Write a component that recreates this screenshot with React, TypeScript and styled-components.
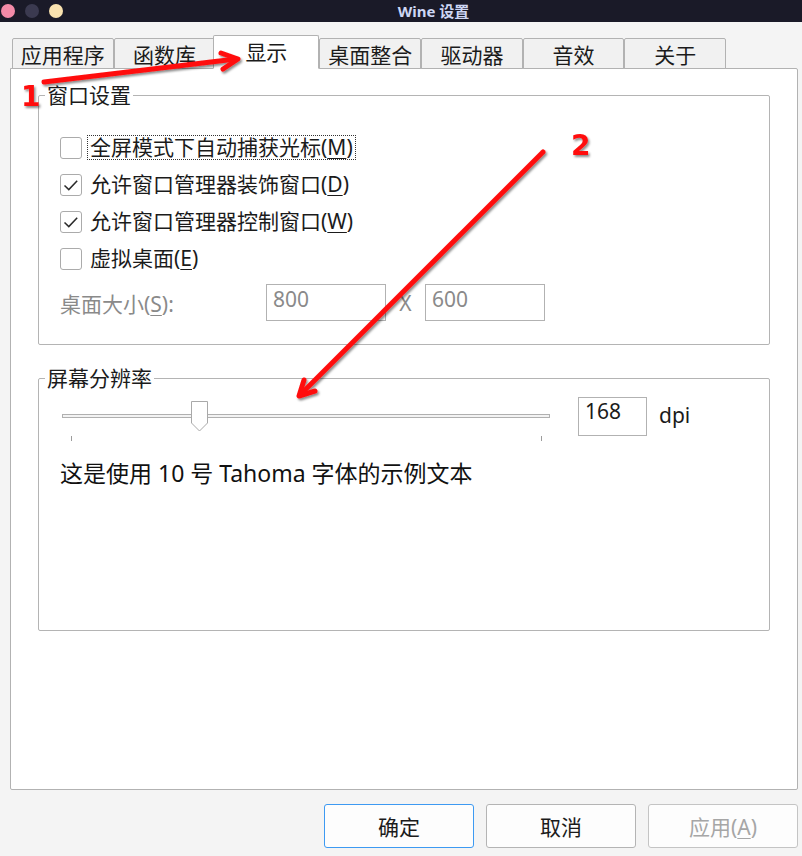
import { createGlobalStyle, styled } from "styled-components";

const GlobalStyle = createGlobalStyle`
  html, body {
    margin: 0;
    padding: 0;
    background: #f4f4f4;
  }

  body {
    font-family: "Noto Sans", "Noto Sans CJK SC", sans-serif;
    color: #1b1b1b;
  }

  * {
    box-sizing: border-box;
  }
`;

const tabs = ["应用程序", "函数库", "显示", "桌面整合", "驱动器", "音效", "关于"];
const activeTab = 2;

// slider geometry, taken from the dialog at 168 dpi
const trackWidth = 488;
const thumbWidth = 18;
const thumbLeft = 129;

const Checkmark = () => (
  <svg width="22" height="22" viewBox="0 0 22 22">
    <path
      d="M4.5 11.5 L8.8 15.6 L17.2 6.8"
      fill="none"
      stroke="#2a2a2a"
      strokeWidth="1.5"
    />
  </svg>
);

const Thumb = () => (
  <svg width="18" height="31" viewBox="0 0 18 31">
    <path
      d="M0.5 0.5 H16.5 V22 L8.5 30 L0.5 22 Z"
      fill="#ffffff"
      stroke="#a9a9a9"
    />
  </svg>
);

interface CheckProps {
  checked?: boolean;
  focused?: boolean;
  children: React.ReactNode;
}

const Check = ({ checked, focused, children }: CheckProps) => (
  <CheckRow>
    <CheckBox>{checked && <Checkmark />}</CheckBox>
    <CheckLabel $focused={focused}>{children}</CheckLabel>
  </CheckRow>
);

const Annotations = () => (
  <Overlay width="802" height="856" viewBox="0 0 802 856">
    <defs>
      <filter id="shade" x="-20%" y="-20%" width="140%" height="140%">
        <feDropShadow dx="1.5" dy="2" stdDeviation="1.2" floodColor="#000" floodOpacity="0.45" />
      </filter>
    </defs>
    <g
      filter="url(#shade)"
      fill="none"
      stroke="#ff1010"
      strokeWidth="5"
      strokeLinecap="round"
      strokeLinejoin="round"
    >
      <path d="M44 82 L236 59" />
      <path d="M221 53 L238 59 L223 69" />
      <path d="M543 152 L300 395" />
      <path d="M315 391 L299 396 L304 380" />
    </g>
    <g filter="url(#shade)" fill="#ff1010" fontFamily="DejaVu Sans, sans-serif" fontWeight="bold" fontSize="28">
      <text x="21" y="106">1</text>
      <text x="571" y="155">2</text>
    </g>
  </Overlay>
);

const App = () => {
  return (
    <Window>
      <GlobalStyle />
      <TitleBar>
        <Lights>
          <Light $color="#f38ba8" />
          <Light $color="#3b3a50" />
          <Light $color="#f9e2af" />
        </Lights>
        <Title>Wine 设置</Title>
      </TitleBar>

      <Body>
        <TabRow>
          {tabs.map((tab, i) => (
            <Tab key={tab} $active={i === activeTab}>
              {tab}
            </Tab>
          ))}
        </TabRow>

        <Pane>
          <GroupBox $padTop={22} $padBottom={23}>
            <Legend>窗口设置</Legend>
            <Check focused>
              全屏模式下自动捕获光标(<Key>M</Key>)
            </Check>
            <Check checked>
              允许窗口管理器装饰窗口(<Key>D</Key>)
            </Check>
            <Check checked>
              允许窗口管理器控制窗口(<Key>W</Key>)
            </Check>
            <Check>
              虚拟桌面(<Key>E</Key>)
            </Check>
            <SizeRow>
              <SizeLabel>
                桌面大小(<Key>S</Key>):
              </SizeLabel>
              <NumberBox>800</NumberBox>
              <Times>X</Times>
              <NumberBox>600</NumberBox>
            </SizeRow>
          </GroupBox>

          <GroupBox $padTop={7} $padBottom={142} $gap={21}>
            <Legend>屏幕分辨率</Legend>
            <SliderRow>
              <Slider>
                <Track />
                <ThumbHolder style={{ left: thumbLeft }}>
                  <Thumb />
                </ThumbHolder>
                <Tick $at={thumbWidth / 2} />
                <Tick $at={trackWidth - thumbWidth / 2} />
              </Slider>
              <DpiBox>168</DpiBox>
              <Unit>dpi</Unit>
            </SliderRow>
            <Sample>这是使用 10 号 Tahoma 字体的示例文本</Sample>
          </GroupBox>
        </Pane>

        <ButtonRow>
          <DialogButton $primary>确定</DialogButton>
          <DialogButton>取消</DialogButton>
          <DialogButton disabled>
            应用(<Key>A</Key>)
          </DialogButton>
        </ButtonRow>
      </Body>

      <Annotations />
    </Window>
  );
};

const Window = styled.div`
  position: relative;
  display: flex;
  flex-direction: column;

  width: 802px;
  height: 856px;

  background-color: #f4f4f4;
  overflow: hidden;
`;

const TitleBar = styled.div`
  display: flex;
  align-items: center;

  height: 22px;
  padding-left: 1px;

  background-color: #1a1a28;
`;

const Lights = styled.div`
  display: flex;
  gap: 10px;
`;

const Light = styled.span<{ $color: string }>`
  width: 14px;
  height: 14px;

  border-radius: 50%;
  background-color: ${({ $color }) => $color};
`;

const Title = styled.div`
  flex: 1;

  padding-left: 2px;

  text-align: center;
  font-size: 15px;
  font-weight: 700;
  line-height: 22px;
  color: #cdd6f4;
`;

const Body = styled.div`
  flex: 1;
  display: flex;
  flex-direction: column;

  padding: 13px 4px 8px 10px;
`;

const TabRow = styled.div`
  position: relative;
  z-index: 1;

  display: flex;
  align-items: flex-end;

  padding-left: 2px;
  margin-bottom: -1px;
`;

const Tab = styled.div<{ $active?: boolean }>`
  display: flex;
  flex-shrink: 0;
  align-items: center;
  justify-content: center;

  width: ${({ $active }) => ($active ? "106px" : "101.7px")};
  height: ${({ $active }) => ($active ? "34px" : "31px")};
  margin-left: ${({ $active }) => ($active ? "-2px" : "0")};
  padding-bottom: ${({ $active }) => ($active ? "3px" : "0")};

  border: 1px solid #b2b2b2;
  border-bottom-color: ${({ $active }) => ($active ? "#ffffff" : "#b2b2b2")};
  border-radius: 2px 2px 0 0;

  background-color: ${({ $active }) => ($active ? "#ffffff" : "#f1f1f1")};

  font-size: 21px;
  color: #1b1b1b;
`;

const Pane = styled.div`
  flex: 1;

  padding: 14px 27px;

  border: 1px solid #b2b2b2;
  border-radius: 0 2px 2px 2px;

  background-color: #ffffff;
`;

const GroupBox = styled.fieldset<{ $padTop: number; $padBottom: number; $gap?: number }>`
  display: flex;
  flex-direction: column;

  min-width: 0;
  margin: ${({ $gap }) => $gap ?? 0}px 0 0;
  padding: ${({ $padTop }) => $padTop}px 20px ${({ $padBottom }) => $padBottom}px 21px;

  border: 1px solid #b4b4b4;
  border-radius: 2px;
`;

const Legend = styled.legend`
  margin-left: -15px;
  padding: 0 2px;

  font-size: 21px;
  line-height: 24px;
  color: #1b1b1b;
`;

const CheckRow = styled.div`
  display: flex;
  align-items: center;

  height: 37px;
`;

const CheckBox = styled.span`
  display: flex;

  width: 22px;
  height: 22px;

  border: 1px solid #ababab;
  border-radius: 3px;

  background-color: #ffffff;

  svg {
    margin: -1px;
  }
`;

const CheckLabel = styled.span<{ $focused?: boolean }>`
  margin-left: 6px;
  padding: 0 2px;

  font-size: 21px;
  line-height: 23px;

  outline: ${({ $focused }) => ($focused ? "1px dotted #333" : "none")};
`;

const Key = styled.span`
  text-decoration: underline;
  text-underline-offset: 3px;
  text-decoration-thickness: 1px;
`;

const SizeRow = styled.div`
  display: flex;
  align-items: center;

  margin-top: 7px;
`;

const SizeLabel = styled.span`
  width: 206px;

  font-size: 21px;
  color: #8a8a8a;
`;

const NumberBox = styled.div`
  width: 120px;
  height: 37px;
  padding-left: 6px;

  border: 1px solid #b2b2b2;
  background-color: #ffffff;

  font-size: 21px;
  line-height: 28px;
  color: #8a8a8a;
`;

const Times = styled.span`
  width: 39px;

  text-align: center;
  font-size: 21px;
  color: #8a8a8a;
`;

const SliderRow = styled.div`
  display: flex;
  align-items: flex-start;
`;

const Slider = styled.div`
  position: relative;

  width: ${trackWidth}px;
  height: 39px;
  margin-left: 2px;
`;

const Track = styled.div`
  position: absolute;
  top: 17px;
  left: 0;
  right: 0;

  height: 4px;

  border: 1px solid #b0b0b0;
  background-color: #f3f3f3;
`;

const ThumbHolder = styled.div`
  position: absolute;
  top: 4px;

  display: flex;
`;

const Tick = styled.span<{ $at: number }>`
  position: absolute;
  top: 39px;
  left: ${({ $at }) => $at}px;

  width: 1px;
  height: 5px;

  background-color: #9c9c9c;
`;

const DpiBox = styled.div`
  width: 69px;
  height: 39px;
  margin-left: 28px;
  padding-left: 6px;

  border: 1px solid #b2b2b2;
  background-color: #ffffff;

  font-size: 21px;
  line-height: 26px;
  color: #1b1b1b;
`;

const Unit = styled.span`
  margin-left: 12px;

  font-size: 21px;
  line-height: 37px;
`;

const Sample = styled.div`
  margin-top: 22px;

  font-size: 23px;
  line-height: 30px;
  color: #111111;
`;

const ButtonRow = styled.div`
  display: flex;
  justify-content: flex-end;
  gap: 12px;

  margin-top: 14px;
`;

const DialogButton = styled.button<{ $primary?: boolean }>`
  width: 150px;
  height: 44px;

  border: 1px solid ${({ $primary }) => ($primary ? "#3d9af2" : "#b4b4b4")};
  border-radius: 3px;

  background-color: #fdfdfd;

  font-family: "Noto Sans", "Noto Sans CJK SC", sans-serif;
  font-size: 21px;
  color: #1b1b1b;

  &:disabled {
    color: #a6a6a6;
    border-color: #c4c4c4;
  }
`;

const Overlay = styled.svg`
  position: absolute;
  top: 0;
  left: 0;
  z-index: 2;

  pointer-events: none;
`;

export default App;
